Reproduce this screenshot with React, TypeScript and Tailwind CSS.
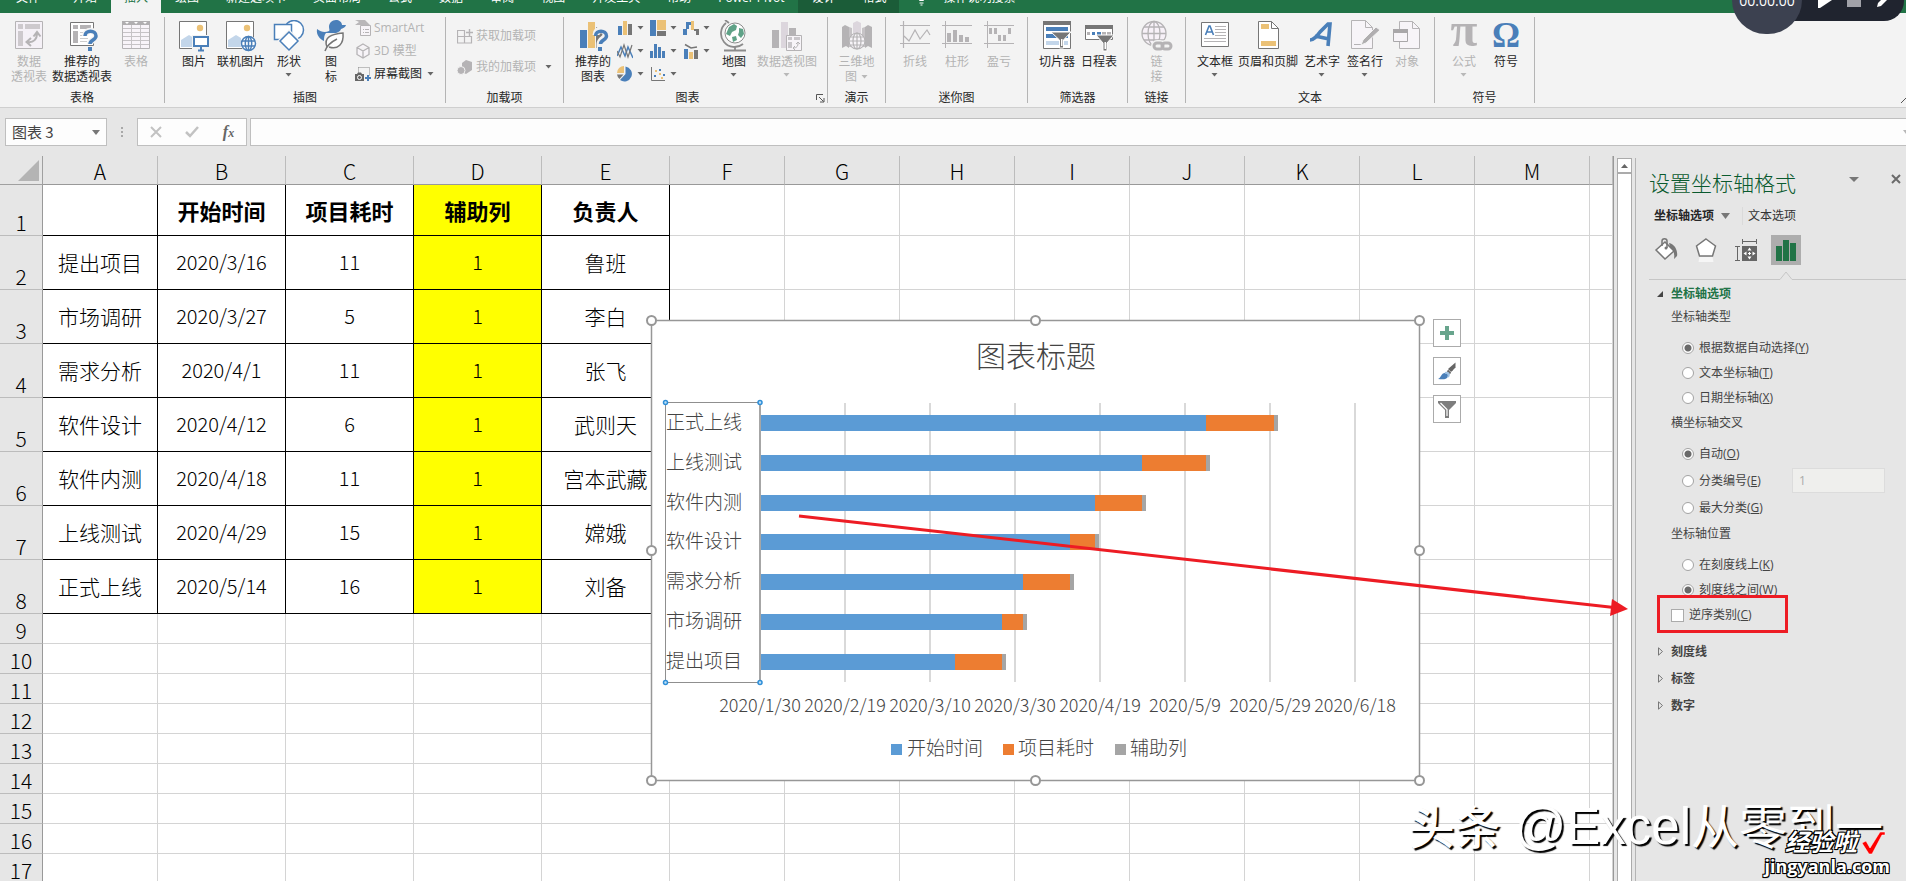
import React from "react";

const BLUE = "#4a7fb9";
const GOLD = "#ebc176";
const GRAY = "#767676";
const DIS = "#b5b3b5";

function Tri({ off = false }: { off?: boolean }) {
  return (
    <svg width="7" height="4" viewBox="0 0 7 4" className="shrink-0" aria-hidden="true">
      <path d="M0.5 0h6L3.5 3.5z" fill={off ? "#b8b8b8" : "#666"} />
    </svg>
  );
}

function Svg({ s = 32, children }: { s?: number; children: React.ReactNode }) {
  return (
    <svg width={s} height={s} viewBox={`0 0 ${s} ${s}`} fill="none" className="shrink-0" aria-hidden="true">
      {children}
    </svg>
  );
}

const icons = {
  pivot: (
    <Svg>
      <path d="M2.5 1.500h27v27h-27z" fill="#f5f1f7" stroke={DIS} />
      <path d="M5 4h5v5H5zM12 4h15v5H12zM5 11h5v15H5z" fill="#cdc9cd" />
      <path d="M14 22c7 1 10-3 10-9m-3.500 3.500L24 12l3.500 4.500M18 18l-4.500 4 4.500 4" stroke={DIS} strokeWidth="2" />
    </Svg>
  ),
  pivotRec: (
    <Svg>
      <path d="M4.500 2.500h23v23h-23z" fill="#fff" stroke={GRAY} />
      <path d="M7 5h5v4H7zM14 5h11v4H14zM7 11h5v12H7z" fill="#b5b3b5" />
      <path d="M14 12.500h6M14 15.500h6M14 18.500h8M14 21.500h7" stroke="#ccc" />
      <path d="M19 16c0-7 11-7 11 0 0 4-6 4-6 8" stroke="#f3f3f3" strokeWidth="6" />
      <path d="M19 16c0-6.500 11-6.500 11 0 0 4-6 4-6 8" stroke={BLUE} strokeWidth="3.500" />
      <path d="M22 27h4v4h-4z" fill={BLUE} />
    </Svg>
  ),
  table: (
    <Svg>
      <path d="M2.500 1.500h27v27h-27z" fill="#f8f4f9" stroke={DIS} />
      <path d="M2 1h28v4H2z" fill="#b0aeb0" />
      <path d="M5 2h4l-2 2zM14 2h4l-2 2zM23 2h4l-2 2z" fill="#fff" />
      <path d="M11.500 5v23M20.500 5v23M3 8.500h26M3 12.500h26M3 16.500h26M3 20.500h26M3 24.500h26" stroke="#c6c3c6" />
    </Svg>
  ),
  picture: (
    <Svg>
      <path d="M1.500 1.500h27v27h-27z" fill="#fff" stroke={GRAY} />
      <circle cx="22" cy="8" r="3.200" fill={GOLD} />
      <path d="M3 27v-7l8-5 5 3v9z" fill="#c3d6ea" />
      <path d="M14 15h18v17H14z" fill="#f3f3f3" />
      <path d="M16 17h14v9H16z" stroke={BLUE} strokeWidth="2" fill="#fff" />
      <path d="M20 30.500h6M23 27v3" stroke={BLUE} strokeWidth="2" />
    </Svg>
  ),
  online: (
    <Svg>
      <path d="M1.500 1.500h27v27h-27z" fill="#fff" stroke={GRAY} />
      <circle cx="22" cy="8" r="3.200" fill={GOLD} />
      <path d="M3 27v-7l8-5 5 3v9z" fill="#c3d6ea" />
      <circle cx="23.500" cy="23.500" r="8" fill="#f6f6f6" />
      <g stroke={BLUE} strokeWidth="1.500">
        <circle cx="23.500" cy="23.500" r="7" fill="#fff" />
        <ellipse cx="23.500" cy="23.500" rx="3.200" ry="7" />
        <path d="M17 21h13M17 26h13M23.500 17v14" />
      </g>
    </Svg>
  ),
  shapes: (
    <Svg>
      <g fill="#fff" stroke={BLUE} strokeWidth="1.500">
        <circle cx="21" cy="10" r="9.500" />
        <path d="M1.500 4.500h17v15h-17z" />
        <path d="M16 12l9 9-9 9-9-9z" stroke="#f3f3f3" strokeWidth="4" />
        <path d="M16 12l9 9-9 9-9-9z" />
      </g>
    </Svg>
  ),
  duck: (
    <Svg>
      <path d="M2 9c4 3 8 4 12 2 1-1 0-2 0-4 0-4 3-7 7-7 3 0 6 2 6 5h4c-1 3-3 3-5 4-1 3-3 3-5 4H11c-2 2-2 5-2 8C5 19 1 15 2 9z" fill={BLUE} />
      <path d="M12 27c-4-10 5-13 16-14 1 11-5 17-14 14M10 31c2-6 6-9 12-12" fill="#fff" stroke={GRAY} strokeWidth="1.500" />
    </Svg>
  ),
  smart: (
    <Svg s={16}>
      <path d="M0 0h10l5 5H0l4-3z" fill="#b9b7b9" />
      <path d="M5.500 5.500h10v10h-10z" fill="#f7f4f8" stroke={DIS} />
      <path d="M8 9.500h1M10 9.500h4M8 12.500h1M10 12.500h4" stroke={DIS} />
    </Svg>
  ),
  cube: (
    <Svg s={16}>
      <path d="M8 1l6 3.500v7L8 15l-6-3.500v-7zM2 4.500L8 8l6-3.500M8 8v7" stroke={DIS} fill="#f7f4f8" strokeWidth="1.300" />
    </Svg>
  ),
  shot: (
    <Svg s={16}>
      <path d="M3.500 1.500h11v8" stroke="#888" strokeDasharray="1 1" />
      <path d="M3.500 1.500v6" stroke="#888" strokeDasharray="1 1" />
      <path d="M0 8h2l1-1.500h3L7 8h2v7H0z" fill="#666" />
      <circle cx="4.500" cy="11.500" r="2" stroke="#fff" />
      <path d="M10 12h6M13 9v6" stroke={BLUE} strokeWidth="2" />
    </Svg>
  ),
  store: (
    <Svg s={16}>
      <path d="M1 2.500h6.500V15M1 8.500h13.500V15H.500V2" stroke={DIS} strokeWidth="1.200" />
      <path d="M9 4.500h7M12.500 1v7" stroke={DIS} strokeWidth="1.400" />
    </Svg>
  ),
  addins: (
    <Svg s={16}>
      <path d="M9 1l6 2v8l-6 4-4-2V4z" fill="#b5b3b5" />
      <circle cx="4" cy="11.500" r="4" fill="#b5b3b5" stroke="#f3f3f3" />
    </Svg>
  ),
  chartRec: (
    <Svg>
      <path d="M3 10h7v18H3z" fill={BLUE} />
      <path d="M11 2h7v26h-7z" fill={GOLD} />
      <path d="M19 7h7v21h-7z" fill={GRAY} />
      <path d="M19 15c0-7 10-7 10 0 0 4-6 4-6 9v7" stroke="#f3f3f3" strokeWidth="7" />
      <path d="M18.500 16c0-6.500 11-6.500 11 0 0 4-6 4-6 8" stroke={BLUE} strokeWidth="3.500" />
      <path d="M21 27h4v4h-4z" fill={BLUE} />
    </Svg>
  ),
  c1: (
    <Svg s={16}>
      <path d="M1 6h4v9H1z" fill={BLUE} /><path d="M6 1h4v14H6z" fill={GOLD} /><path d="M11 4h4v11h-4z" fill={GRAY} />
    </Svg>
  ),
  c2: (
    <Svg s={16}>
      <path d="M0 0h6v16H0z" fill={BLUE} /><path d="M7 0h9v10H7z" fill={GOLD} /><path d="M7 11h9v5H7z" fill={GRAY} />
    </Svg>
  ),
  c3: (
    <Svg s={16}>
      <path d="M0 9h3V2h5v3H6v4H4v6H0z" fill={BLUE} /><path d="M8 1h3v9H8z" fill={GOLD} /><path d="M11 9h5v6h-3v-4h-2z" fill={GRAY} />
    </Svg>
  ),
  c4: (
    <Svg s={16}>
      <path d="M0 13L4 4l4 9 3-9 5 11" stroke={BLUE} strokeWidth="1.500" />
      <path d="M0 8l3 6 4-12 4 12 4-12" stroke={GRAY} strokeWidth="1.200" />
    </Svg>
  ),
  c5: (
    <Svg s={16}>
      <path d="M0 8h3v7H0zM4 1h3v14H4zM8 4h3v11H8zM12 8h3v7h-3z" fill={BLUE} />
    </Svg>
  ),
  c6: (
    <Svg s={16}>
      <path d="M1 6h4v10H1z" fill={BLUE} /><path d="M6 9h4v7H6z" fill={GOLD} /><path d="M11 7h4v9h-4z" fill={GRAY} />
      <path d="M2 1.500l6 3.500 6-1" stroke={GRAY} strokeWidth="1.500" />
    </Svg>
  ),
  c7: (
    <Svg s={16}>
      <path d="M8.500 .500A7.500 7.500 0 1 1 3 14l5.500-6z" fill={BLUE} /><path d="M7 0v7H0a7 7 0 0 1 7-7z" fill={GOLD} /><path d="M0 8.500h6.500L2.500 13A7 7 0 0 1 0 8.500z" fill={GRAY} />
    </Svg>
  ),
  c8: (
    <Svg s={16}>
      <path d="M1.500 1v13.500H15" stroke={GRAY} />
      <path d="M4 9h2v2H4zM9 3h2v2H9zM13 8h2v2h-2z" fill={BLUE} /><path d="M5 4h2v2H5zM9 7h2v2H9zM11 11h2v2h-2z" fill={GOLD} />
    </Svg>
  ),
  globe: (
    <Svg>
      <circle cx="17" cy="13" r="10" fill="#fff" stroke="#8b8b8b" />
      <path d="M11 7l5-3 3 2-1 4-4 2-2 4-4-2zM21 8l4 1 1 5-3 4-3-3 1-3zM14 17l4-1 1 4-4 2z" fill="#5fa287" />
      <path d="M8 3A13 13 0 0 0 25 24M17 26v4M7 0l4 3M6 30.500h22" stroke="#8b8b8b" strokeWidth="1.800" />
    </Svg>
  ),
  pivotChart: (
    <Svg>
      <path d="M1 10h7v18H1z" fill="#b5b3b5" /><path d="M10 2h7v26h-7z" fill="#dcd6dd" /><path d="M18 8h7v20h-7z" fill="#b5b3b5" />
      <path d="M15.500 15.500h15v15h-15z" fill="#f7f4f8" stroke={DIS} />
      <path d="M17 17h4v3h-4zM23 17h6v3h-6zM17 22h4v6h-4z" fill="#c9c6ca" />
      <path d="M22 28c4 0 5-2 5-5m-2 1l2-2 2 2M24 26l-2 2 2 2" stroke={DIS} />
    </Svg>
  ),
  map3d: (
    <Svg>
      <path d="M1 7l3-2 4 2v21l-3-2-4 2zM24 7l3-2 4 2v21l-4-2-3 2z" fill="#b5b3b5" />
      <path d="M12 3l4-2 4 2v22h-8z" fill="#dcd6dd" /><path d="M8 7l3 1v19H8zM21 8l3-1v20h-3z" fill="#c6c3c6" />
      <g stroke={DIS} strokeWidth="1.200"><circle cx="16" cy="21" r="8" fill="#f7f4f8" /><ellipse cx="16" cy="21" rx="4" ry="8" /><path d="M8 21h16M9.500 17h13M9.500 25h13M16 13v16" /></g>
    </Svg>
  ),
  spLine: (
    <Svg>
      <path d="M1 5.500h30M1 23.500h30M4.500 1v27M5 16l5 5 6-11 5 9 7-9 3 5" stroke={DIS} strokeWidth="1.200" />
    </Svg>
  ),
  spCol: (
    <Svg>
      <path d="M1 5.500h30M1 23.500h30M4.500 1v27" stroke={DIS} />
      <path d="M6 13h4v9H6zM12 10h4v12h-4zM18 15h4v7h-4zM24 17h4v5h-4z" fill={DIS} />
    </Svg>
  ),
  spWin: (
    <Svg>
      <path d="M1 5.500h30M1 23.500h30M4.500 1v27" stroke={DIS} />
      <path d="M6 8h3v6H6zM11 8h3v6h-3zM15 15h3v6h-3zM20 15h3v6h-3zM25 8h3v6h-3z" fill={DIS} />
    </Svg>
  ),
  slicer: (
    <Svg>
      <path d="M2.500 1.500h27v27h-27z" fill="#fff" stroke={GRAY} /><path d="M2 1h28v4H2z" fill={GRAY} />
      <path d="M5 7h22v4H5zM5 14h22v4H5z" fill={BLUE} /><path d="M5 21h22v4H5z" fill="#c3d6ea" />
      <path d="M10 12h20l-7.500 8v8h-4v-8z" fill={GRAY} stroke="#fff" /><path d="M20 19h1.500v7H20z" fill="#fff" />
    </Svg>
  ),
  timeline: (
    <Svg>
      <path d="M2.500 5.500h27v14h-27z" fill="#fff" stroke={GRAY} /><path d="M2 5h28v4H2z" fill={GRAY} />
      <path d="M4 12h3v3H4zM19 12h4v3h-4zM24 12h4v3h-4z" fill="#b5b3b5" /><path d="M9 12h3v3H9zM14 12h4v3h-4z" fill={BLUE} />
      <path d="M13 15h18l-7 8v8h-4v-8z" fill={GRAY} stroke="#fff" /><path d="M21.500 22H23v7h-1.500z" fill="#fff" />
    </Svg>
  ),
  link: (
    <Svg>
      <g stroke={DIS} strokeWidth="1.300"><circle cx="13" cy="13.500" r="12" fill="#f7f1f8" /><ellipse cx="13" cy="13.500" rx="6" ry="12" /><path d="M1 13.500h24M3 7h20M3 20h20M13 1.500v24" /></g>
      <g stroke="#f3f3f3" strokeWidth="6"><rect x="13" y="23" width="9" height="6" rx="3" /><rect x="21" y="23" width="9" height="6" rx="3" /></g>
      <g stroke={DIS} strokeWidth="3"><rect x="13" y="23" width="9" height="6" rx="3" /><rect x="21" y="23" width="9" height="6" rx="3" /></g>
    </Svg>
  ),
  textbox: (
    <Svg>
      <path d="M2.500 2.500h27v24h-27z" fill="#fff" stroke={GRAY} />
      <path d="M6.500 15l3.500-9h1l3.500 9M8 12h5" stroke={BLUE} strokeWidth="1.600" />
      <path d="M16 6.500h11M16 9.500h11M16 12.500h11M16 15.500h11M5 18.500h22M5 21.500h22" stroke="#b5b3b5" />
    </Svg>
  ),
  header: (
    <Svg>
      <path d="M6.500 1.500h13l7 7v20h-20z" fill="#fff" stroke={GRAY} /><path d="M19.500 1.500v7h7" stroke={GRAY} />
      <path d="M9 4h8v5H9zM9 21h15v5H9z" fill={GOLD} />
    </Svg>
  ),
  wordart: (
    <Svg>
      <path d="M4 20c4 0 7-4 10-8l8-8h2l-2 22M9 16l14 3" stroke={BLUE} strokeWidth="3.600" />
    </Svg>
  ),
  sign: (
    <Svg>
      <path d="M2.500 .500h14l7 7v21h-21z" fill="#f7f4f8" stroke={DIS} /><path d="M16.500 .500v7h7M5 24.500h9" stroke={DIS} />
      <path d="M27 7l4 3-14 13-5 2 2-5z" fill="#b0aeb0" stroke="#f3f3f3" />
    </Svg>
  ),
  object: (
    <Svg>
      <path d="M8.500 1.500h13l7 7v20h-20z" fill="#f7f4f8" stroke={DIS} /><path d="M21.500 1.500v7h7" stroke={DIS} />
      <path d="M2.500 9.500h14v12h-14z" fill="#f7f4f8" stroke="#a9a7a9" /><path d="M2 9h15v4H2z" fill="#a9a7a9" />
    </Svg>
  ),
  pi: (
    <Svg>
      <text x="16" y="26" textAnchor="middle" fontSize="49" fontFamily="Liberation Serif" fontWeight="700" fill={DIS}>π</text>
    </Svg>
  ),
  omega: (
    <Svg>
      <text x="16" y="27" textAnchor="middle" fontSize="35" fontFamily="Liberation Serif" fontWeight="700" fill={BLUE}>Ω</text>
    </Svg>
  ),
};

type BigProps = { icon: React.ReactNode; lines: string[]; w: string; off?: boolean; arrow?: boolean; arrowInline?: boolean };

function Big({ icon, lines, w, off, arrow, arrowInline }: BigProps) {
  return (
    <button className={`flex shrink-0 flex-col items-center gap-0.5 ${w} ${off ? "text-[#b3b3b3]" : "text-[#262626]"}`}>
      {icon}
      <span className="flex flex-col items-center whitespace-nowrap text-[12px] leading-[15px]">
        {lines.map((l, i) => (
          <span key={l} className="flex items-center gap-1">
            {l}
            {arrowInline && i === lines.length - 1 && <Tri off={off} />}
          </span>
        ))}
        {arrow && <span className="flex h-3 items-center"><Tri off={off} /></span>}
      </span>
    </button>
  );
}

function Small({ icon, label, off, arrow }: { icon: React.ReactNode; label: string; off?: boolean; arrow?: string }) {
  return (
    <button className={`flex h-[23px] items-center gap-[3px] whitespace-nowrap text-[12px] ${off ? "text-[#b3b3b3]" : "text-[#262626]"}`}>
      {icon}
      {label}
      {arrow && <span className={arrow}><Tri /></span>}
    </button>
  );
}

function Group({ w, label, pad = "", children, launcher }: { w: string; label: string; pad?: string; children: React.ReactNode; launcher?: boolean }) {
  return (
    <section aria-label={label} className={`relative flex h-[86px] shrink-0 flex-col border-r border-[#b4b4b4] ${w}`}>
      <div className={`flex h-[73px] shrink-0 items-start pt-[3px] ${pad}`}>{children}</div>
      <div className={`text-center text-[12px] leading-[15px] text-[#262626] ${launcher ? "pr-4" : ""}`}>{label}</div>
      {launcher && (
        <button aria-label="图表选项" className="absolute right-0.5 bottom-0">
          <svg width="9" height="9" viewBox="0 0 9 9" fill="none"><path d="M.5 6V.5H7M3 3l4.500 4.500M8 4v4H4" stroke="#555" /></svg>
        </button>
      )}
    </section>
  );
}

const leftTabs = ["绘图", "新建选项卡", "页面布局", "公式", "数据", "审阅", "视图", "开发工具", "帮助", "Power Pivot"];

function Ribbon() {
  return (
    <header className="shrink-0 bg-[#f3f3f3]">
      <nav className="flex h-[13px] items-end gap-px overflow-hidden bg-[#217346] pb-[7px] text-[12px] leading-4 text-white">
        <a href="#file" className="px-4">文件</a>
        <a href="#home" className="pr-[13px] pl-4">开始</a>
        <a href="#insert" className="-mb-[7px] bg-[#f3f3f3] px-[13px] pb-[7px] text-[#217346]">插入</a>
        {leftTabs.map((t) => (
          <a key={t} href="#tab" className="px-[13px] whitespace-nowrap">{t}</a>
        ))}
        <div className="-mb-[7px] flex items-end gap-px bg-[#1b5c38] pb-[7px]">
          <a href="#design" className="px-[13px]">设计</a>
          <a href="#format" className="px-[13px]">格式</a>
        </div>
        <a href="#tell" className="ml-4 flex items-end gap-4">
          <svg width="11" height="15" viewBox="0 0 11 15" fill="none" stroke="#fff"><path d="M3.500 9.500C0 6 1 1 5.500 1S11 6 7.500 9.500zM3.500 12h4M4.500 14h2" /></svg>
          操作说明搜索
        </a>
      </nav>
      <div className="flex h-[95px] border-b border-[#cfcfcf] pt-1">
        <Group w="w-[165px]" label="表格" pad="pl-0.5">
          <Big icon={icons.pivot} lines={["数据", "透视表"]} w="w-[54px]" off />
          <Big icon={icons.pivotRec} lines={["推荐的", "数据透视表"]} w="w-[52px]" />
          <Big icon={icons.table} lines={["表格"]} w="w-[56px]" off />
        </Group>
        <Group w="w-[281px]" label="插图" pad="pl-[5px]">
          <Big icon={icons.picture} lines={["图片"]} w="w-[48px]" />
          <Big icon={icons.online} lines={["联机图片"]} w="w-[46px]" />
          <Big icon={icons.shapes} lines={["形状"]} w="w-[50px]" arrow />
          <Big icon={icons.duck} lines={["图", "标"]} w="w-[34px]" />
          <div className="-mt-1 flex flex-col pl-[7px]">
            <Small icon={icons.smart} label="SmartArt" off />
            <Small icon={icons.cube} label="3D 模型" off />
            <Small icon={icons.shot} label="屏幕截图" arrow="pl-0.5" />
          </div>
        </Group>
        <Group w="w-[118px]" label="加载项" pad="pl-[11px]">
          <div className="flex flex-col gap-2 pt-1">
            <Small icon={icons.store} label="获取加载项" off />
            <Small icon={icons.addins} label="我的加载项" off arrow="pl-1.5" />
          </div>
        </Group>
        <Group w="w-[264px]" label="图表" pad="pl-[5px]" launcher>
          <Big icon={icons.chartRec} lines={["推荐的", "图表"]} w="w-[48px]" />
          <div className="-mt-1 grid grid-cols-[33px_33px_33px]">
            {[icons.c1, icons.c2, icons.c3, icons.c4, icons.c5, icons.c6, icons.c7, icons.c8].map((ic, i) => (
              <button key={i} aria-label="图表类型" className="flex h-[23px] items-center gap-1">
                {ic}
                <Tri />
              </button>
            ))}
          </div>
          <Big icon={icons.globe} lines={["地图"]} w="w-[36px]" arrow />
          <Big icon={icons.pivotChart} lines={["数据透视图"]} w="w-[70px]" off arrow />
        </Group>
        <Group w="w-[58px]" label="演示">
          <Big icon={icons.map3d} lines={["三维地", "图"]} w="w-full" off arrowInline />
        </Group>
        <Group w="w-[142px]" label="迷你图" pad="pl-2">
          <Big icon={icons.spLine} lines={["折线"]} w="w-[42px]" off />
          <Big icon={icons.spCol} lines={["柱形"]} w="w-[42px]" off />
          <Big icon={icons.spWin} lines={["盈亏"]} w="w-[42px]" off />
        </Group>
        <Group w="w-[100px]" label="筛选器" pad="pl-2">
          <Big icon={icons.slicer} lines={["切片器"]} w="w-[42px]" />
          <Big icon={icons.timeline} lines={["日程表"]} w="w-[42px]" />
        </Group>
        <Group w="w-[58px]" label="链接">
          <Big icon={icons.link} lines={["链", "接"]} w="w-full" off />
        </Group>
        <Group w="w-[249px]" label="文本" pad="pl-2">
          <Big icon={icons.textbox} lines={["文本框"]} w="w-[42px]" arrow />
          <Big icon={icons.header} lines={["页眉和页脚"]} w="w-[64px]" />
          <Big icon={icons.wordart} lines={["艺术字"]} w="w-[44px]" arrow />
          <Big icon={icons.sign} lines={["签名行"]} w="w-[42px]" arrow />
          <Big icon={icons.object} lines={["对象"]} w="w-[42px]" off />
        </Group>
        <Group w="w-[100px]" label="符号" pad="pl-2">
          <Big icon={icons.pi} lines={["公式"]} w="w-[42px]" off arrow />
          <Big icon={icons.omega} lines={["符号"]} w="w-[42px]" />
        </Group>
        <div className="flex flex-1 items-end justify-end pb-1">
          <svg width="5" height="5" viewBox="0 0 5 5"><path d="M0 5l5-5" stroke="#555" /></svg>
        </div>
      </div>
    </header>
  );
}

function FormulaBar() {
  return (
    <div className="flex h-12 shrink-0 items-start pt-2.5 pl-[5px]">
      <div className="flex h-7 w-[102px] shrink-0 items-center justify-between border border-[#bfbfbf] bg-[#fdfdfd] pr-1.5 pl-1.5">
        <input aria-label="名称框" defaultValue="图表 3" className="w-[70px] bg-transparent font-['Noto_Sans_CJK_SC',sans-serif] text-[15px] text-[#444] outline-none" />
        <svg width="8" height="5" viewBox="0 0 8 5"><path d="M0 0h8L4 5z" fill="#777" /></svg>
      </div>
      <div className="flex h-7 w-[30px] shrink-0 items-center justify-center">
        <svg width="2" height="10" viewBox="0 0 2 10" fill="#a8a8a8"><path d="M0 0h2v2H0zM0 4h2v2H0zM0 8h2v2H0z" /></svg>
      </div>
      <div className="flex h-7 w-[110px] shrink-0 items-center justify-around border border-[#bfbfbf] bg-[#fdfdfd]">
        <button aria-label="取消"><svg width="12" height="12" viewBox="0 0 12 12"><path d="M1 1l10 10M11 1L1 11" stroke="#c2c2c2" strokeWidth="2" /></svg></button>
        <button aria-label="输入"><svg width="14" height="12" viewBox="0 0 14 12" fill="none"><path d="M1 6l4 4 8-9" stroke="#c2c2c2" strokeWidth="2.500" /></svg></button>
        <button className="font-['Liberation_Serif',serif] text-[16px] leading-5 font-bold text-[#666] italic">f<span className="text-[12px]">x</span></button>
      </div>
      <div className="ml-[3px] flex h-7 min-w-0 flex-1 items-center border border-r-0 border-[#bfbfbf] bg-[#fdfdfd]">
        <input aria-label="编辑栏" className="min-w-0 flex-1 bg-transparent outline-none" />
        <svg width="3" height="4" viewBox="0 0 3 4"><path d="M0 0h3v4z" fill="#b8b8b8" /></svg>
      </div>
    </div>
  );
}

const letters = ["A", "B", "C", "D", "E", "F", "G", "H", "I", "J", "K", "L", "M", ""];
const data = [
  ["", "开始时间", "项目耗时", "辅助列", "负责人"],
  ["提出项目", "2020/3/16", "11", "1", "鲁班"],
  ["市场调研", "2020/3/27", "5", "1", "李白"],
  ["需求分析", "2020/4/1", "11", "1", "张飞"],
  ["软件设计", "2020/4/12", "6", "1", "武则天"],
  ["软件内测", "2020/4/18", "11", "1", "宫本武藏"],
  ["上线测试", "2020/4/29", "15", "1", "嫦娥"],
  ["正式上线", "2020/5/14", "16", "1", "刘备"],
];

function rowHeight(r: number) {
  if (r === 0) return "h-[51px]";
  return r < 8 ? "h-[54px]" : "h-[30px]";
}

function Sheet() {
  return (
    <table className="w-full table-fixed border-separate border-spacing-0 bg-white font-light text-black">
      <colgroup>
        <col className="w-[43px]" />
        <col className="w-[115px]" />
        {[0, 1, 2, 3].map((i) => <col key={i} className="w-[128px]" />)}
        {[0, 1, 2, 3, 4, 5, 6, 7].map((i) => <col key={i} className="w-[115px]" />)}
        <col />
      </colgroup>
      <thead>
        <tr className="h-[29px] bg-[#e6e6e6]">
          <th className="border-r border-b border-[#a0a0a0] p-0 pr-[3px]">
            <svg width="21" height="21" viewBox="0 0 21 21" className="ml-auto"><path d="M21 0v21H0z" fill="#b4b4b4" /></svg>
          </th>
          {letters.map((l, i) => (
            <th key={i} className="border-r border-b border-r-[#bcbcbc] border-b-[#999] p-0 pt-0.5 text-[21px] leading-6 font-light">{l}</th>
          ))}
        </tr>
      </thead>
      <tbody>
        {Array.from({ length: 17 }, (_, r) => (
          <tr key={r} className={rowHeight(r)}>
            <th className="border-r border-b border-r-[#999] border-b-[#bcbcbc] bg-[#e6e6e6] p-0 pb-px align-bottom text-[21px] leading-6 font-light">{r + 1}</th>
            {letters.map((_, c) => {
              const inTable = r < 8 && c < 5;
              const text = inTable ? data[r][c] : "";
              const size = r === 0 ? "text-[22px] font-bold" : c === 0 || c === 4 ? "text-[21px]" : "text-[20px]";
              return (
                <td
                  key={c}
                  className={`border-r border-b p-0 pb-px text-center leading-6 whitespace-nowrap ${size} ${inTable ? "border-black" : "border-[#d4d4d4]"} ${inTable && c === 3 ? "bg-[#ffff00]" : ""}`}
                >
                  {text}
                </td>
              );
            })}
          </tr>
        ))}
      </tbody>
    </table>
  );
}

const tasks: [string, number, number][] = [
  ["正式上线", 105, 16],
  ["上线测试", 90, 15],
  ["软件内测", 79, 11],
  ["软件设计", 73, 6],
  ["需求分析", 62, 11],
  ["市场调研", 57, 5],
  ["提出项目", 46, 11],
];
const ticks = ["2020/1/30", "2020/2/19", "2020/3/10", "2020/3/30", "2020/4/19", "2020/5/9", "2020/5/29", "2020/6/18"];
const DAY = 4.25;

function Chart() {
  return (
    <svg width="784" height="476" viewBox="-8 -8 784 476" fill="none" className="absolute top-[156px] left-[643px]" role="img" aria-label="图表标题">
      <rect x="0.5" y="0.5" width="768" height="460" fill="#fff" stroke="#979797" strokeWidth="1.500" />
      <text x="385" y="47" textAnchor="middle" fontSize="30" fontWeight="300" fill="#444">图表标题</text>
      {ticks.map((t, i) => (
        <g key={t}>
          {i > 0 && <path d={`M${109 + i * 85} 83v279`} stroke="#d9d9d9" strokeWidth="2" />}
          <text x={109 + i * 85} y="392" textAnchor="middle" fontSize="18" fontWeight="300" fill="#444">{t}</text>
        </g>
      ))}
      {tasks.map(([name, start, len], i) => {
        const y = 95 + i * 40 - (i > 2 ? 1 : 0);
        const a = Math.floor(start * DAY);
        const b = Math.floor((start + len) * DAY);
        return (
          <g key={name}>
            <text x="15" y={y + 14} fontSize="19" fontWeight="300" fill="#444">{name}</text>
            <rect x="110" y={y} width={a - 1} height="16" fill="#5b9bd5" />
            <rect x={109 + a} y={y} width={b - a} height="16" fill="#ed7d31" />
            <rect x={109 + b} y={y} width="4" height="16" fill="#a5a5a5" />
          </g>
        );
      })}
      <path d="M14.500 82v280M14 82.500h95M14 362.500h95" stroke="#8f8f8f" />
      <path d="M109 82v281" stroke="#a6a6a6" strokeWidth="2" />
      <g fill="#bfe0f7" stroke="#2f8fd8" strokeWidth="1.500">
        <circle cx="14.500" cy="82.500" r="2" /><circle cx="109" cy="82.500" r="2" /><circle cx="14.500" cy="362.500" r="2" /><circle cx="109" cy="362.500" r="2" />
      </g>
      <rect x="240" y="424" width="11" height="11" fill="#5b9bd5" />
      <rect x="352" y="424" width="11" height="11" fill="#ed7d31" />
      <rect x="464" y="424" width="11" height="11" fill="#a5a5a5" />
      <g fontSize="19" fontWeight="300" fill="#444">
        <text x="256" y="435">开始时间</text>
        <text x="367" y="435">项目耗时</text>
        <text x="479" y="435">辅助列</text>
      </g>
      <g fill="#fff" stroke="#979797" strokeWidth="2">
        {[0.5, 384.5, 768.5].map((x) => [0.5, 230.5, 460.5].map((y) => (x === 384.5 && y === 230.5 ? null : <circle key={`${x}-${y}`} cx={x} cy={y} r="4.500" />)))}
      </g>
    </svg>
  );
}

function ChartButtons() {
  const cls = "flex size-7 items-center justify-center border border-[#ababab] bg-white";
  return (
    <div className="absolute top-[163px] left-[1433px] flex flex-col gap-2.5">
      <button aria-label="图表元素" className={cls}><svg width="14" height="14" viewBox="0 0 14 14"><path d="M5 0h4v5h5v4H9v5H5V9H0V5h5z" fill="#68a58d" /></svg></button>
      <button aria-label="图表样式" className={cls}>
        <svg width="18" height="18" viewBox="0 0 18 18" fill="none"><path d="M17.500.500v5L13 10l-3-3z" fill="#666" /><path d="M12 6l2.500 2.500M9.500 8.500l3 3" stroke="#666" strokeWidth="2" /><path d="M0 17c3-1 3-6 7-6 3 0 4 3 2 5-2 2-6 1-9 1z" fill={BLUE} /><path d="M7 11c3-1 5 1 3 4" stroke="#9dc0e2" strokeWidth="2" /></svg>
      </button>
      <button aria-label="图表筛选器" className={cls}>
        <svg width="18" height="17" viewBox="0 0 18 17"><path d="M0 0h18v2l-7 7v8H7V9L0 2z" fill="#7d7d7d" /><path d="M2.500 2L9 8.500V15" stroke="#fff" strokeWidth="1.200" fill="none" /></svg>
      </button>
    </div>
  );
}

function Radio({ name, label, k, checked, h }: { name: string; label: string; k: string; checked?: boolean; h: string }) {
  return (
    <label className={`flex items-center gap-[5px] pl-[46px] ${h}`}>
      <input type="radio" name={name} defaultChecked={checked} className="size-3 appearance-none rounded-full border border-[#a3a3a3] bg-white checked:bg-[radial-gradient(circle,#6a6a6a_3px,#ffffff_4px)]" />
      <span>{label}(<u>{k}</u>)</span>
    </label>
  );
}

function Collapsed({ label }: { label: string }) {
  return (
    <button className="flex h-[27px] items-center gap-2 pl-[22px] font-bold">
      <svg width="5" height="9" viewBox="0 0 5 9" fill="none"><path d="M.5.800v7.400L4.500 4.500z" stroke="#777" /></svg>
      {label}
    </button>
  );
}

function Pane() {
  return (
    <aside className="flex w-[270px] shrink-0 flex-col text-[12px] text-[#444]">
      <div className="flex h-[50px] items-center pt-1 pl-[13px]">
        <h2 className="flex-1 text-[21px] leading-6 font-light whitespace-nowrap text-[#0a5a2e]">设置坐标轴格式</h2>
        <button aria-label="任务窗格选项" className="mb-2"><svg width="10" height="5" viewBox="0 0 10 5"><path d="M0 0h10L5 5z" fill="#777" /></svg></button>
        <button aria-label="关闭" className="mr-[5px] mb-2 ml-8"><svg width="10" height="10" viewBox="0 0 10 10"><path d="M1 1l8 8M9 1L1 9" stroke="#6a6a6a" strokeWidth="2" /></svg></button>
      </div>
      <div className="flex h-5 items-center pl-[18px]">
        <button className="flex items-center gap-[7px] font-bold text-[#262626]">
          坐标轴选项
          <svg width="9" height="6" viewBox="0 0 9 6"><path d="M0 0h9L4.500 6z" fill="#777" /></svg>
        </button>
        <button className="ml-3 border-l border-[#dadada] pl-[5px] text-[#333]">文本选项</button>
      </div>
      <div className="mt-[9px] flex h-[30px] items-center pl-[18px]">
        <button aria-label="填充与线条" className="w-10">
          <svg width="25" height="24" viewBox="0 0 25 24" fill="none"><path d="M11 4l9 9-9 8-9-9z" fill="#fff" stroke="#777" strokeWidth="1.500" /><path d="M8 8V3c0-3 5-3 5 0v7" stroke="#777" strokeWidth="1.500" /><path d="M15 5c6 1 9 8 8 13l-3 3c1-6-1-10-4-12z" fill="#777" /><circle cx="12" cy="10" r="1.500" fill="#777" /></svg>
        </button>
        <button aria-label="效果" className="w-10">
          <svg width="25" height="26" viewBox="0 0 25 26" fill="none"><path d="M12 2l9.500 7-3 10h-13l-3-10z" fill="#fff" stroke="#777" strokeWidth="1.500" /><path d="M5.500 20h13l1 5h-15z" fill="#f6f6f6" /></svg>
        </button>
        <button aria-label="大小与属性" className="w-[37px]">
          <svg width="24" height="24" viewBox="0 0 24 24" fill="none"><path d="M8 8h15v15H8z" fill="#666" /><path d="M8.500 1v5M22.500 1v5M9 3.500h13M1 8.500h5M1 22.500h5M3.500 9v13" stroke="#666" /><path d="M15.500 9.500l2 3h-4zM15.500 21.500l2-3h-4zM9.500 15.500l3-2v4zM21.500 15.500l-3-2v4z" fill="#fff" /><path d="M15 14h1v1h1v1h-1v1h-1v-1h-1v-1h1z" fill="#fff" /></svg>
        </button>
        <button aria-label="坐标轴选项" className="flex size-[30px] items-center justify-center bg-[#adadad]">
          <svg width="20" height="21" viewBox="0 0 20 21" fill="#217346"><path d="M0 6h6v15H0zM7 0h6v21H7zM14 3h6v18h-6z" /></svg>
        </button>
      </div>
      <div className="mt-1.5 ml-[13px] flex h-[9px] items-end">
        <div className="h-px w-[131px] bg-[#c6c6c6]" />
        <svg width="12" height="9" viewBox="0 0 12 9" fill="none"><path d="M0 8.500L6 1l6 7.500" stroke="#c6c6c6" /></svg>
        <div className="h-px flex-1 bg-[#c6c6c6]" />
      </div>
      <button className="mt-1 flex h-5 items-center gap-2 pl-[21px] font-bold text-[#217346]">
        <svg width="6" height="6" viewBox="0 0 6 6"><path d="M6 0v6H0z" fill="#444" /></svg>
        坐标轴选项
      </button>
      <fieldset className="pt-px">
        <legend className="flex h-6 items-center pt-0.5 pl-[35px]">坐标轴类型</legend>
        <div className="mt-1.5">
          <Radio name="type" label="根据数据自动选择" k="Y" checked h="h-[25px]" />
          <Radio name="type" label="文本坐标轴" k="T" h="h-[25px]" />
          <Radio name="type" label="日期坐标轴" k="X" h="h-[25px]" />
        </div>
      </fieldset>
      <fieldset>
        <legend className="flex h-6 items-center pt-0.5 pl-[35px]">横坐标轴交叉</legend>
        <div className="mt-1.5">
          <Radio name="cross" label="自动" k="O" checked h="h-[27px]" />
          <div className="flex h-[27px] items-center justify-between pr-[21px]">
            <Radio name="cross" label="分类编号" k="E" h="h-[27px]" />
            <input aria-label="分类编号值" disabled defaultValue="1" className="h-[25px] w-[93px] border border-[#dcdcdc] bg-[#efefed] pl-1.5 text-[12px] text-[#aaa]" />
          </div>
          <Radio name="cross" label="最大分类" k="G" h="h-[27px]" />
        </div>
      </fieldset>
      <fieldset>
        <legend className="flex h-6 items-center pt-0.5 pl-[35px]">坐标轴位置</legend>
        <div className="mt-[7px]">
          <Radio name="pos" label="在刻度线上" k="K" h="h-[25px]" />
          <Radio name="pos" label="刻度线之间" k="W" checked h="h-[25px]" />
        </div>
      </fieldset>
      <label className="relative mt-px flex h-6 items-center gap-[5px] pl-[35px]">
        <input type="checkbox" className="size-[13px] appearance-none border border-[#ababab] bg-white" />
        <span>逆序类别(<u>C</u>)</span>
        <span className="absolute -top-2 left-[21px] h-[38px] w-[131px] border-[3px] border-[#ed1c24]" />
      </label>
      <div className="mt-[11px] flex flex-col">
        <Collapsed label="刻度线" />
        <Collapsed label="标签" />
        <Collapsed label="数字" />
      </div>
    </aside>
  );
}

function Recorder() {
  return (
    <div className="absolute top-0 right-0.5 flex h-[34px] overflow-hidden">
      <div className="relative z-10 flex h-[34px] w-[70px] justify-center overflow-hidden rounded-b-full bg-[#3c4150]">
        <span className="-mt-[11px] text-[14px] leading-6 text-white">00:00:00</span>
      </div>
      <div className="-ml-9 h-[21px] w-[138px] rounded-br-[20px] bg-[#20242f] pl-[52px]">
        <svg width="70" height="8" viewBox="0 0 70 8">
          <path d="M0 0h14L2 8H0z" fill="#fff" /><path d="M29 0h14v7H29z" fill="#a0a1a8" /><path d="M59 7l1-4 3-3h6l-6 6z" fill="#fff" />
        </svg>
      </div>
    </div>
  );
}

function Watermarks() {
  return (
    <>
      <div className="absolute right-[23px] bottom-[16px] flex items-baseline font-['Liberation_Sans','Noto_Sans_CJK_SC',sans-serif] text-[48px] leading-[74px] whitespace-nowrap text-white [text-shadow:2px_2px_1px_#000]">
        <b className="mr-3.5 text-[46px] font-medium">头条</b>
        <span className="text-[51px]">@Excel</span>
        从零到一
      </div>
      <div className="absolute right-4 bottom-[5px] flex flex-col items-end font-bold text-white [text-shadow:1px_1px_0_#000,-1px_-1px_0_#000,1px_-1px_0_#000,-1px_1px_0_#000,0_1px_1px_#000]">
        <div className="flex items-center gap-1 pr-1 text-[24px] leading-7 italic">
          经验啦
          <svg width="25" height="25" viewBox="0 0 25 25" fill="none"><path d="M1 13l4-2 4 7L19 2h5v3h-3L11 24H8z" fill="#f00" stroke="#fff" strokeWidth=".5" /></svg>
        </div>
        <div className="text-[18px] leading-5">jingyanla.com</div>
      </div>
    </>
  );
}

export default function App() {
  return (
    <div className="relative flex h-screen flex-col overflow-hidden bg-[#e6e6e6] font-['Open_Sans','Noto_Sans_CJK_SC',sans-serif]">
      <Ribbon />
      <FormulaBar />
      <div className="flex min-h-0 flex-1">
        <main className="relative min-w-0 flex-1 overflow-hidden border-r border-[#999] font-['Noto_Sans_CJK_SC',sans-serif]">
          <Sheet />
          <div className="absolute inset-0 overflow-hidden">
            <Chart />
            <ChartButtons />
          </div>
        </main>
        <div className="mt-0.5 ml-[3px] flex w-[15px] shrink-0 flex-col border-x border-[#ababab] bg-white">
          <button aria-label="向上滚动" className="flex h-4 items-center justify-center border-t border-b-2 border-[#ababab]">
            <svg width="7" height="4" viewBox="0 0 7 4"><path d="M0 4h7L3.500 0z" fill="#666" /></svg>
          </button>
        </div>
        <div className="mt-0.5 ml-[3px] w-px shrink-0 bg-[#b4b4b4]" />
        <Pane />
      </div>
      <svg width="832" height="104" viewBox="0 0 832 104" className="pointer-events-none absolute top-[514px] left-[798px]" aria-hidden="true">
        <path d="M1 2l815 91.500" stroke="#ed1c24" strokeWidth="3" />
        <path d="M814 85l16 10-18 7z" fill="#ed1c24" />
      </svg>
      <Watermarks />
      <Recorder />
    </div>
  );
}
